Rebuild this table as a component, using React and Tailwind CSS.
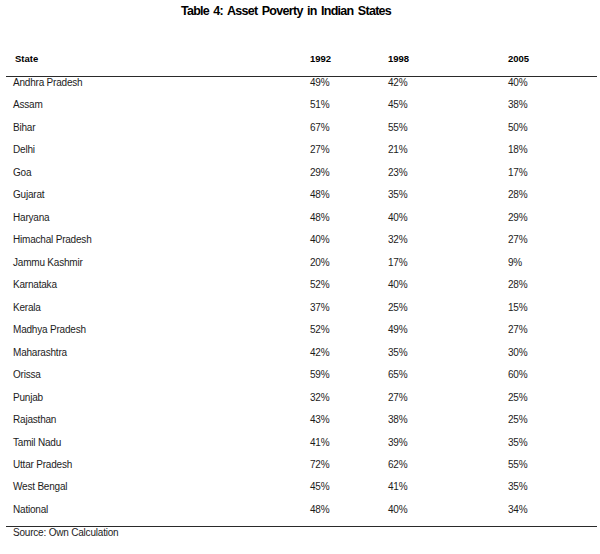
const rows = [
  ["Andhra Pradesh", "49%", "42%", "40%"],
  ["Assam", "51%", "45%", "38%"],
  ["Bihar", "67%", "55%", "50%"],
  ["Delhi", "27%", "21%", "18%"],
  ["Goa", "29%", "23%", "17%"],
  ["Gujarat", "48%", "35%", "28%"],
  ["Haryana", "48%", "40%", "29%"],
  ["Himachal Pradesh", "40%", "32%", "27%"],
  ["Jammu Kashmir", "20%", "17%", "9%"],
  ["Karnataka", "52%", "40%", "28%"],
  ["Kerala", "37%", "25%", "15%"],
  ["Madhya Pradesh", "52%", "49%", "27%"],
  ["Maharashtra", "42%", "35%", "30%"],
  ["Orissa", "59%", "65%", "60%"],
  ["Punjab", "32%", "27%", "25%"],
  ["Rajasthan", "43%", "38%", "25%"],
  ["Tamil Nadu", "41%", "39%", "35%"],
  ["Uttar Pradesh", "72%", "62%", "55%"],
  ["West Bengal", "45%", "41%", "35%"],
  ["National", "48%", "40%", "34%"],
];

const App = () => {
  return (
    <div className="w-[600px] h-[554px] bg-white text-[#1c1c1c] font-['Liberation_Sans',Arial,sans-serif]">
      <h1 className="pt-[4px] pr-[28px] text-center text-[12.5px] leading-[14px] font-bold tracking-[-0.7px] [word-spacing:1.5px] text-black">
        Table 4: Asset Poverty in Indian States
      </h1>

      <div className="ml-[6px] w-[591px] mt-[34px]">
        <div className="grid grid-cols-[304px_78px_120px_1fr] h-[24px] text-[9.5px] leading-[14px] font-bold text-black">
          <div className="pl-[9px]">State</div>
          <div>1992</div>
          <div>1998</div>
          <div>2005</div>
        </div>

        <div className="border-t border-[#2a2a2a]">
          {rows.map(([state, a, b, c]) => (
            <div
              key={state}
              className="grid grid-cols-[304px_78px_120px_1fr] h-[22.47px] text-[10px] leading-[11px] tracking-[-0.2px]"
            >
              <div className="pl-[7px]">{state}</div>
              <div>{a}</div>
              <div>{b}</div>
              <div>{c}</div>
            </div>
          ))}
        </div>

        <div className="border-t border-[#2a2a2a] pl-[7px] text-[10px] leading-[11px] tracking-[-0.2px]">
          Source: Own Calculation
        </div>
      </div>
    </div>
  );
};

export default App;
